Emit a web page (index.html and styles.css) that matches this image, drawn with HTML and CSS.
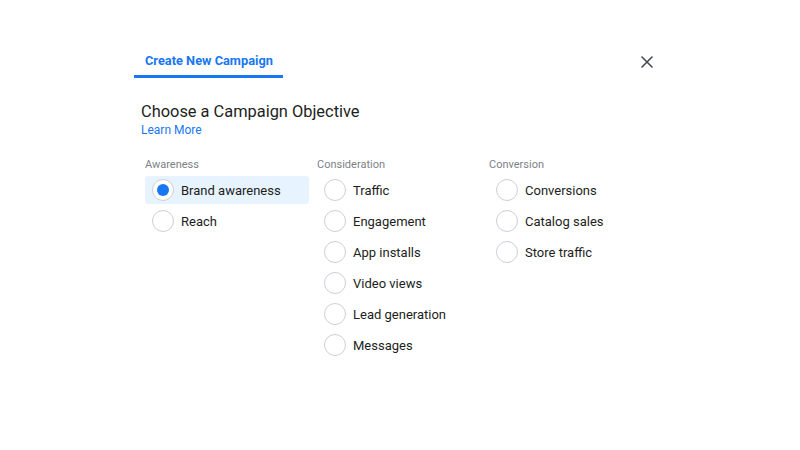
FILE: index.html
```html
<!DOCTYPE html>
<html>
<head>
<meta charset="utf-8">
<link rel="stylesheet" href="styles.css">
</head>
<body>
<div class="dialog">
  <div class="header">
    <div class="tab">Create New Campaign</div>
    <button class="close" aria-label="Close">
      <svg width="12" height="12" viewBox="0 0 12 12"><path d="M1 1L11 11M11 1L1 11" stroke="#444950" stroke-width="1.6" stroke-linecap="round"/></svg>
    </button>
  </div>
  <div class="intro">
    <h1 class="title">Choose a Campaign Objective</h1>
    <a class="learn" href="#">Learn More</a>
  </div>
  <div class="columns">
    <div class="col">
      <div class="label">Awareness</div>
      <div class="item selected"><span class="radio"></span><span>Brand awareness</span></div>
      <div class="item"><span class="radio"></span><span>Reach</span></div>
    </div>
    <div class="col">
      <div class="label">Consideration</div>
      <div class="item"><span class="radio"></span><span>Traffic</span></div>
      <div class="item"><span class="radio"></span><span>Engagement</span></div>
      <div class="item"><span class="radio"></span><span>App installs</span></div>
      <div class="item"><span class="radio"></span><span>Video views</span></div>
      <div class="item"><span class="radio"></span><span>Lead generation</span></div>
      <div class="item"><span class="radio"></span><span>Messages</span></div>
    </div>
    <div class="col">
      <div class="label">Conversion</div>
      <div class="item"><span class="radio"></span><span>Conversions</span></div>
      <div class="item"><span class="radio"></span><span>Catalog sales</span></div>
      <div class="item"><span class="radio"></span><span>Store traffic</span></div>
    </div>
  </div>
</div>
</body>
</html>
```
FILE: styles.css
```css
html, body {
  margin: 0;
  padding: 0;
  background: #fff;
  font-family: Roboto, "Liberation Sans", Arial, sans-serif;
  color: #1c1e21;
}
.dialog {
  width: 800px;
  height: 450px;
}
.header {
  display: flex;
  justify-content: space-between;
  align-items: flex-start;
  margin-left: 134px;
  width: 521px;
}
.tab {
  padding: 53px 10px 6px 11px;
  font-size: 12.8px;
  line-height: 16px;
  font-weight: 700;
  color: #1877f2;
  border-bottom: 3px solid #1877f2;
}
.close {
  margin-top: 56px;
  margin-right: 2px;
  padding: 0;
  border: 0;
  background: none;
  width: 12px;
  height: 12px;
  display: flex;
}
.intro {
  padding-left: 141px;
  margin-top: 24px;
}
.title {
  margin: 0;
  font-size: 16.4px;
  line-height: 20px;
  font-weight: 400;
  color: #1c1e21;
}
.learn {
  display: block;
  margin-top: 1px;
  font-size: 12px;
  line-height: 14px;
  color: #1877f2;
  text-decoration: none;
}
.columns {
  display: flex;
  padding-left: 145px;
  margin-top: 20px;
}
.col {
  width: 172px;
}
.label {
  padding-top: 1px;
  font-size: 11px;
  line-height: 14px;
  color: #7d8187;
  margin-bottom: 4px;
}
.item {
  display: flex;
  align-items: center;
  width: 164px;
  height: 28px;
  margin-bottom: 3px;
  border-radius: 3px;
  font-size: 13px;
  color: #1c1e21;
}
.item.selected {
  background: #e7f3ff;
}
.radio {
  box-sizing: border-box;
  width: 22px;
  height: 22px;
  margin-left: 7px;
  margin-right: 7px;
  border: 1px solid #ccd0d5;
  border-radius: 50%;
  background: #fff;
  display: flex;
  align-items: center;
  justify-content: center;
  flex: none;
}
.item.selected .radio::after {
  content: "";
  width: 12px;
  height: 12px;
  border-radius: 50%;
  background: #1877f2;
}
```
